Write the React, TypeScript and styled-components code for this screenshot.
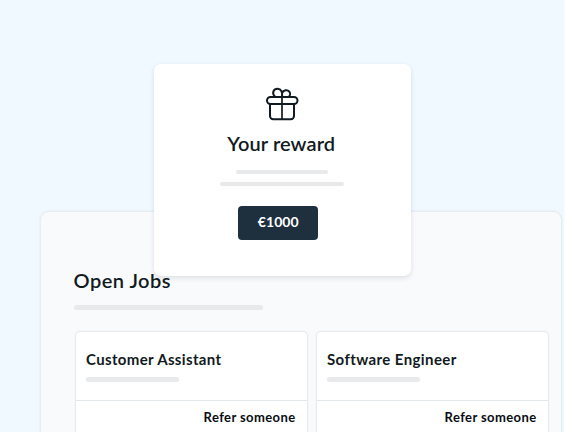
import React from "react";
import styled, { createGlobalStyle } from "styled-components";

const GlobalStyle = createGlobalStyle`
  *, *::before, *::after { box-sizing: border-box; }
  body { margin: 0; overflow: hidden; font-family: Lato, "Open Sans", sans-serif; }
`;

const Page = styled.main`
  position: relative;
  width: 565px;
  height: 432px;
  overflow: hidden;
  padding: 211px 0 0 40px;
  background: #f0f9ff;
  border-right: 1px solid #fafdff;
  color: #111a21;
`;

const Panel = styled.section`
  width: 522px;
  height: 260px;
  padding: 56px 12px 0 32.5px;
  border: 1px solid #e9edf0;
  border-radius: 9px;
  background: #f9fafc;
  box-shadow: 0 0 2px rgba(30, 45, 60, 0.1);
`;

const Text = styled.div<{ $size: number; $spacing: number; $weight?: number }>`
  font-size: ${(p) => p.$size}px;
  font-weight: ${(p) => p.$weight ?? 700};
  line-height: 24px;
  letter-spacing: ${(p) => p.$spacing}px;
  white-space: nowrap;
`;

const PanelTitle = styled(Text)`
  position: relative;
  z-index: 2;
`;

const Bar = styled.div<{ $width: number; $height?: number; $top: number }>`
  width: ${(p) => p.$width}px;
  height: ${(p) => p.$height ?? 5}px;
  margin-top: ${(p) => p.$top}px;
  border-radius: 3px;
  background: #e8e9eb;
`;

const Jobs = styled.div`
  display: grid;
  grid-template-columns: 233px 233px;
  gap: 8px;
  margin: 21px 0 0 1px;
`;

const Job = styled.article`
  height: 140px;
  border: 1px solid #e8eaed;
  border-radius: 5px;
  background: #fff;
  box-shadow: 0 0 2px rgba(30, 45, 60, 0.06);
`;

const JobInfo = styled.div`
  height: 69px;
  padding: 15px 0 0 10.5px;
  border-bottom: 1px solid #e4e7e9;
`;

const JobAction = styled.div`
  display: flex;
  justify-content: flex-end;
  padding: 4px 11px 0 0;
  color: #080d11;
`;

const RewardCard = styled.section`
  position: absolute;
  z-index: 1;
  top: 64px;
  left: 154px;
  width: 256.5px;
  height: 212px;
  display: flex;
  flex-direction: column;
  align-items: center;
  padding-top: 23px;
  border-radius: 7px;
  background: #fff;
  box-shadow: 0 2px 5px rgba(30, 45, 60, 0.13);
`;

const RewardTitle = styled(Text)`
  margin: 9px 2px 0 0;
`;

const Amount = styled.div`
  display: flex;
  align-items: center;
  justify-content: center;
  width: 80px;
  height: 34px;
  margin: 20px 8px 0 0;
  padding-bottom: 2px;
  border-radius: 4px;
  background: #1e2f3d;
  color: #fff;
`;

const GiftIcon = () => (
  <svg width="34" height="35" viewBox="0 0 34 35" fill="none" stroke="#111a21" strokeWidth="2" strokeLinejoin="round">
    <rect x="2" y="10" width="30.5" height="7" rx="3.5" />
    <path d="M5 17v12a3.2 3.2 0 0 0 3.2 3.2h17.6A3.2 3.2 0 0 0 29 29V17" />
    <path d="M10 9.8C6.4 6.2 8.5 1.8 12.6 1.8c3.4 0 5.1 3 4.6 8.2M17.2 5.8c1.2-2.9 5.3-3.5 7.1-1.2 1.4 1.9.8 4.2-.8 5.4" />
    <path d="M17 7v25" strokeWidth="1.7" />
  </svg>
);

const jobs = [
  { title: "Customer Assistant", spacing: 0.35 },
  { title: "Software Engineer", spacing: 0.4 },
];

export default function App() {
  return (
    <>
      <GlobalStyle />
      <Page>
        <Panel>
          <PanelTitle $size={20} $spacing={0.5} $weight={600}>Open Jobs</PanelTitle>
          <Bar $width={189} $top={13} />
          <Jobs>
            {jobs.map((job) => (
              <Job key={job.title}>
                <JobInfo>
                  <Text $size={15} $spacing={job.spacing}>{job.title}</Text>
                  <Bar $width={93} $top={6} />
                </JobInfo>
                <JobAction>
                  <Text $size={13} $spacing={0.4}>Refer someone</Text>
                </JobAction>
              </Job>
            ))}
          </Jobs>
        </Panel>
        <RewardCard>
          <GiftIcon />
          <RewardTitle $size={20} $spacing={0.1} $weight={600}>Your reward</RewardTitle>
          <Bar $width={92} $height={4} $top={15} />
          <Bar $width={124} $height={4} $top={8} />
          <Amount>
            <Text $size={14} $spacing={0.1}>€1000</Text>
          </Amount>
        </RewardCard>
      </Page>
    </>
  );
}
